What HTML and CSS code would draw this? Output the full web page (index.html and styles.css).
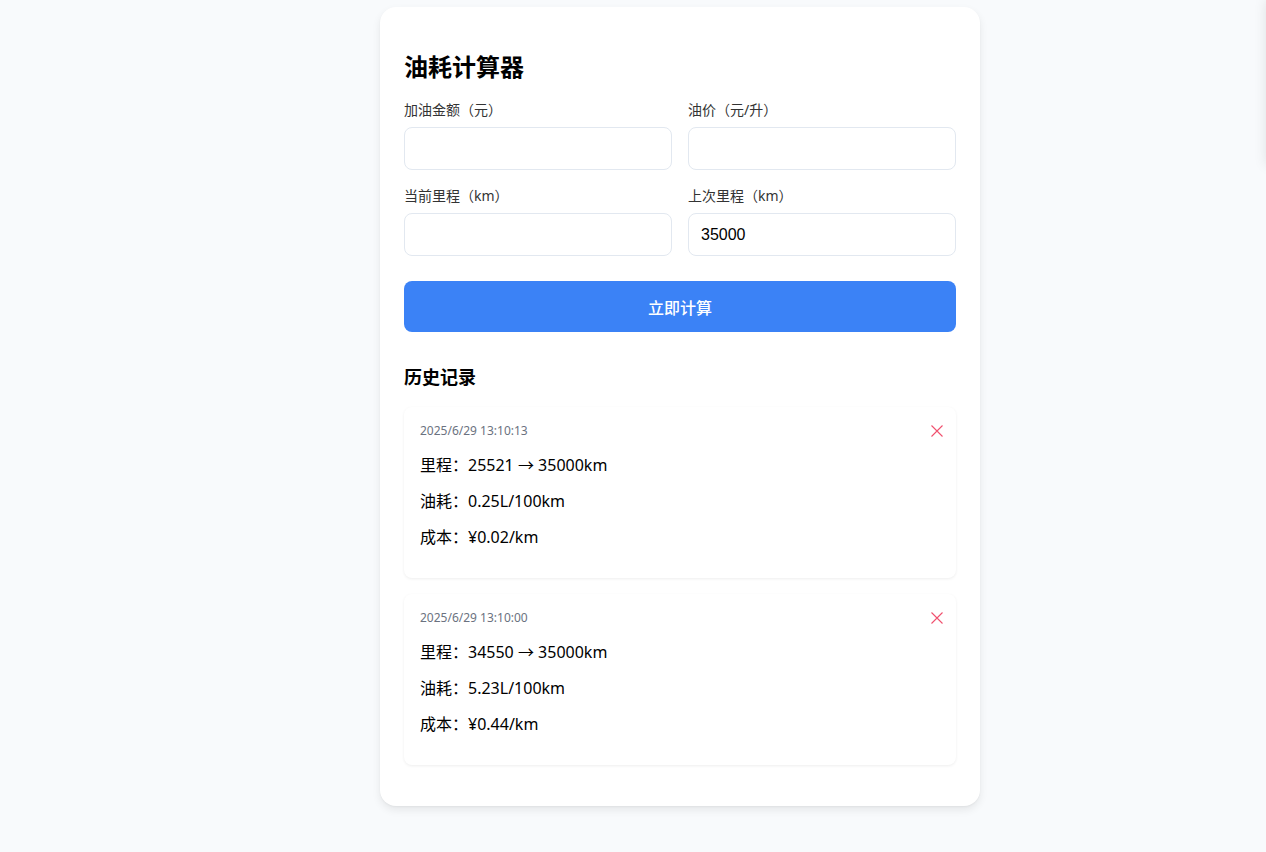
FILE: index.html
```html
<!DOCTYPE html>
<html lang="zh-CN">
<head>
<meta charset="utf-8">
<title>油耗计算器</title>
<link rel="stylesheet" href="styles.css">
</head>
<body>
<div class="page">
  <div class="card">
    <h1 class="title">油耗计算器</h1>
    <div class="form-grid">
      <div class="field">
        <label class="label">加油金额（元）</label>
        <input class="input" type="text" value="">
      </div>
      <div class="field">
        <label class="label">油价（元/升）</label>
        <input class="input" type="text" value="">
      </div>
      <div class="field">
        <label class="label">当前里程（km）</label>
        <input class="input" type="text" value="">
      </div>
      <div class="field">
        <label class="label">上次里程（km）</label>
        <input class="input" type="text" value="35000">
      </div>
    </div>
    <button class="btn">立即计算</button>
    <h2 class="subtitle">历史记录</h2>
    <div class="history">
      <div class="item">
        <div class="item-head">
          <span class="date">2025/6/29 13:10:13</span>
          <svg class="del" width="12" height="12" viewBox="0 0 12 12"><path d="M0.5 0.5L11.5 11.5M11.5 0.5L0.5 11.5" stroke="#f0506e" stroke-width="1.1" fill="none"/></svg>
        </div>
        <p class="line">里程：25521 <span class="arrow">→</span> 35000km</p>
        <p class="line">油耗：0.25L/100km</p>
        <p class="line">成本：¥0.02/km</p>
      </div>
      <div class="item">
        <div class="item-head">
          <span class="date">2025/6/29 13:10:00</span>
          <svg class="del" width="12" height="12" viewBox="0 0 12 12"><path d="M0.5 0.5L11.5 11.5M11.5 0.5L0.5 11.5" stroke="#f0506e" stroke-width="1.1" fill="none"/></svg>
        </div>
        <p class="line">里程：34550 <span class="arrow">→</span> 35000km</p>
        <p class="line">油耗：5.23L/100km</p>
        <p class="line">成本：¥0.44/km</p>
      </div>
    </div>
  </div>
</div>
<div class="toast"></div>
</body>
</html>
```
FILE: styles.css
```css
html, body {
  margin: 0;
  padding: 0;
  background: #f8fafc;
  font-family: "Noto Sans", "Noto Sans CJK SC", sans-serif;
  color: #111;
}
.page {
  padding: 7px 0 40px 94px;
}
.card {
  width: 600px;
  box-sizing: border-box;
  margin: 0 auto;
  background: #fff;
  border-radius: 16px;
  padding: 24px 24px 25px;
  box-shadow: 0 4px 8px rgba(0, 0, 0, 0.08), 0 1px 2px rgba(0, 0, 0, 0.04);
}
.title {
  margin: 20px 0 17px;
  font-size: 24px;
  line-height: 32px;
  height: 32px;
  font-weight: 700;
  color: #000;
}
.form-grid {
  display: grid;
  grid-template-columns: 1fr 1fr;
  column-gap: 16px;
  row-gap: 16px;
}
.field {
  display: flex;
  flex-direction: column;
}
.label {
  font-size: 14px;
  line-height: 20px;
  height: 20px;
  margin-bottom: 7px;
  color: #333;
}
.input {
  height: 43px;
  box-sizing: border-box;
  border: 1px solid #e2e8f0;
  border-radius: 8px;
  padding: 0 12px;
  font-size: 16px;
  font-family: "Liberation Sans", "Noto Sans CJK SC", sans-serif;
  color: #000;
  background: #fff;
  outline: none;
}
.btn {
  display: block;
  width: 100%;
  height: 51px;
  margin-top: 25px;
  border: none;
  border-radius: 8px;
  background: #3b82f6;
  color: #fff;
  font-size: 16px;
  font-weight: 500;
  font-family: "Noto Sans CJK SC", sans-serif;
}
.subtitle {
  margin: 33px 0 18px;
  font-size: 18px;
  line-height: 24px;
  height: 24px;
  font-weight: 700;
  color: #000;
}
.item {
  background: #fff;
  border-radius: 8px;
  padding: 16px;
  margin-bottom: 16px;
  box-shadow: 0 1px 3px rgba(0, 0, 0, 0.07);
}
.item-head {
  display: flex;
  justify-content: space-between;
  align-items: center;
  height: 16px;
}
.date {
  font-size: 12px;
  line-height: 16px;
  color: #6b7280;
}
.del {
  margin-right: -3px;
}
.line {
  margin: 16px 0 0;
  font-size: 16px;
  line-height: 20px;
  height: 20px;
  color: #000;
}
.arrow {
  font-family: "Noto Sans CJK SC", sans-serif;
  line-height: 0;
}
.line:last-child {
  margin-bottom: 15px;
}
.toast {
  position: fixed;
  top: 0;
  left: 100%;
  width: 300px;
  height: 165px;
  background: #fff;
  box-shadow: 0 0 12px rgba(0, 0, 0, 0.1);
}
```
